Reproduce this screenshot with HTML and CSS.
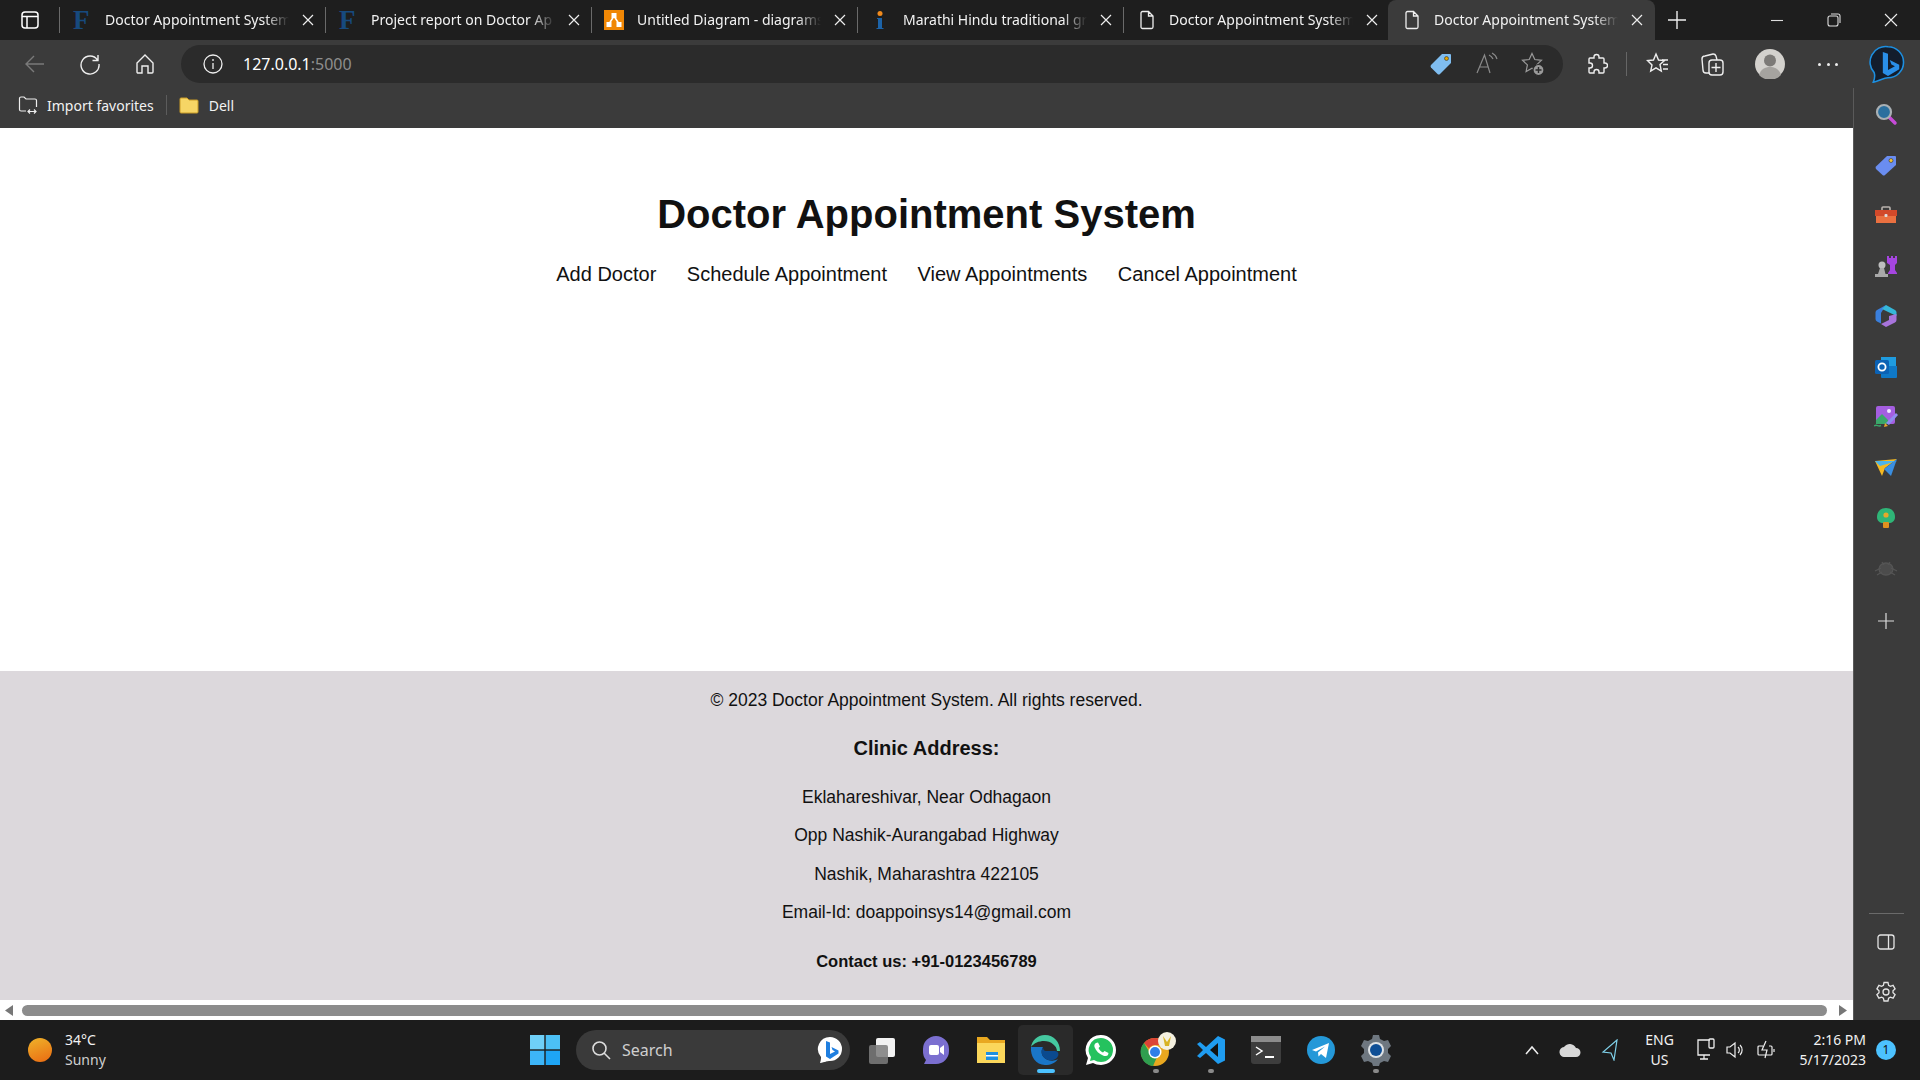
FILE: index.html

```html
<!DOCTYPE html>
<html lang="en">
<head>
    <meta charset="UTF-8">
    <title>Doctor Appointment System</title>
    <link rel="stylesheet" href="styles.css">
</head>
<body>
    <div class="tabstrip">
        <div class="tabActions">
            <svg width="20" height="20" viewBox="0 0 20 20" fill="none" stroke="#fff" stroke-width="1.5"><rect x="2" y="2" width="16" height="16" rx="3"/><path d="M2 6.5h16M7 6.5V18"/></svg>
        </div>
        <div class="tab">
            <span class="favF">F</span>
            <span class="tabTitle">Doctor Appointment System</span>
            <svg class="tabClose" width="12" height="12" viewBox="0 0 12 12" stroke="#eee" stroke-width="1.2"><path d="M1 1l10 10M11 1L1 11"/></svg>
        </div>
        <div class="tab">
            <span class="favF">F</span>
            <span class="tabTitle">Project report on Doctor Ap</span>
            <svg class="tabClose" width="12" height="12" viewBox="0 0 12 12" stroke="#eee" stroke-width="1.2"><path d="M1 1l10 10M11 1L1 11"/></svg>
        </div>
        <div class="tab">
            <svg class="fav" width="20" height="20" viewBox="0 0 20 20"><rect width="20" height="20" fill="#f08705"/><path d="M10 6L5 14M10 6l5 8" stroke="#fff" stroke-width="1.5"/><rect x="7.5" y="3" width="5" height="5" fill="#fff"/><rect x="2.5" y="12" width="5" height="5" fill="#fff"/><rect x="12.5" y="12" width="5" height="5" fill="#fff"/></svg>
            <span class="tabTitle">Untitled Diagram - diagrams</span>
            <svg class="tabClose" width="12" height="12" viewBox="0 0 12 12" stroke="#eee" stroke-width="1.2"><path d="M1 1l10 10M11 1L1 11"/></svg>
        </div>
        <div class="tab">
            <svg class="fav" width="20" height="20" viewBox="0 0 20 20"><circle cx="10" cy="3.5" r="2.5" fill="#f08a1d"/><path d="M8 8h4v10h1.5v1h-7v-1H8v-9H7V8z" fill="#1c63a8"/></svg>
            <span class="tabTitle">Marathi Hindu traditional gr</span>
            <svg class="tabClose" width="12" height="12" viewBox="0 0 12 12" stroke="#eee" stroke-width="1.2"><path d="M1 1l10 10M11 1L1 11"/></svg>
        </div>
        <div class="tab">
            <svg class="fav favPage" width="20" height="20" viewBox="0 0 20 20" fill="none" stroke="#eee" stroke-width="1.3"><path d="M4 3a1.5 1.5 0 0 1 1.5-1.5h6L16 6v11a1.5 1.5 0 0 1-1.5 1.5h-9A1.5 1.5 0 0 1 4 17zM11.5 1.500V6H16"/></svg>
            <span class="tabTitle">Doctor Appointment System</span>
            <svg class="tabClose" width="12" height="12" viewBox="0 0 12 12" stroke="#eee" stroke-width="1.2"><path d="M1 1l10 10M11 1L1 11"/></svg>
        </div>
        <div class="tab tabActive">
            <svg class="fav favPage" width="20" height="20" viewBox="0 0 20 20" fill="none" stroke="#eee" stroke-width="1.3"><path d="M4 3a1.5 1.5 0 0 1 1.5-1.5h6L16 6v11a1.5 1.5 0 0 1-1.5 1.5h-9A1.5 1.5 0 0 1 4 17zM11.5 1.500V6H16"/></svg>
            <span class="tabTitle">Doctor Appointment System</span>
            <svg class="tabClose" width="12" height="12" viewBox="0 0 12 12" stroke="#eee" stroke-width="1.2"><path d="M1 1l10 10M11 1L1 11"/></svg>
        </div>
        <svg class="newTab" width="18" height="18" viewBox="0 0 18 18" stroke="#eee" stroke-width="1.4"><path d="M9 0v18M0 9h18"/></svg>
        <div class="windowButtons">
            <svg width="14" height="14" viewBox="0 0 14 14" stroke="#ddd" stroke-width="1.1"><path d="M1 7.500h12"/></svg>
            <svg width="14" height="14" viewBox="0 0 14 14" fill="none" stroke="#ddd" stroke-width="1.1"><rect x="1" y="3" width="10" height="10" rx="2"/><path d="M4 1h7a2 2 0 0 1 2 2v7"/></svg>
            <svg width="14" height="14" viewBox="0 0 14 14" stroke="#eee" stroke-width="1.1"><path d="M1 1l12 12M13 1L1 13"/></svg>
        </div>
    </div>

    <div class="toolbar">
        <svg class="navBack" width="22" height="22" viewBox="0 0 22 22" fill="none" stroke="#7a7a7a" stroke-width="1.4"><path d="M20 11H2M10 3l-8 8 8 8"/></svg>
        <svg class="navIcon" width="22" height="22" viewBox="0 0 22 22" fill="none" stroke="#eee" stroke-width="1.4"><path d="M18.500 7A9 9 0 1 0 20 11M19 2v5.500h-5.500"/></svg>
        <svg class="navIcon" width="22" height="22" viewBox="0 0 22 22" fill="none" stroke="#eee" stroke-width="1.4"><path d="M3 10l8-8 8 8v9a1 1 0 0 1-1 1h-4v-7H8v7H4a1 1 0 0 1-1-1z"/></svg>
        <div class="omnibox">
            <svg width="20" height="20" viewBox="0 0 20 20" fill="none" stroke="#eee" stroke-width="1.3"><circle cx="10" cy="10" r="9"/><path d="M10 9v6M10 5v2"/></svg>
            <span class="url">127.0.0.1<span class="urlPort">:5000</span></span>
            <div class="omniIcons">
                <svg width="24" height="24" viewBox="0 0 24 24"><path d="M13 2h8a1 1 0 0 1 1 1v8L11 22a2 2 0 0 1-2.500 0l-6.500-6.500a2 2 0 0 1 0-2.500z" fill="#7fbdf0"/><circle cx="17.500" cy="6.500" r="2" fill="#e2a400" stroke="#333" stroke-width=".6"/></svg>
                <svg width="24" height="24" viewBox="0 0 24 24" fill="none" stroke="#8a8a8a" stroke-width="1.2"><path d="M2 21L9.500 3 15 21M5 15h8M14 3a8 8 0 0 1 4 4M17 1a10 10 0 0 1 5 6"/></svg>
                <svg width="24" height="24" viewBox="0 0 24 24" fill="none" stroke="#9a9a9a" stroke-width="1.2"><path d="M11 1.500l2.800 6 6.700.8-4.900 4.600 1.300 6.600-5.900-3.300-5.900 3.300 1.300-6.600L1.500 8.300l6.700-.8z"/><circle cx="17.500" cy="18" r="5.500" fill="#9a9a9a" stroke="#2b2b2b"/><path d="M17.500 15v6M14.500 18h6" stroke="#2b2b2b" stroke-width="1.400"/></svg>
            </div>
        </div>
        <div class="toolIcons">
            <svg width="24" height="24" viewBox="0 0 24 24" fill="none" stroke="#eee" stroke-width="1.4"><path d="M10 6V5a2.500 2.500 0 0 1 5 0v1h4a1 1 0 0 1 1 1v4h1a2.500 2.500 0 0 1 0 5h-1v4a1 1 0 0 1-1 1h-4v-1a2.500 2.500 0 0 0-5 0v1H6a1 1 0 0 1-1-1v-4h1a2.500 2.500 0 0 0 0-5H5V7a1 1 0 0 1 1-1z"/></svg>
            <span class="toolSep"></span>
            <svg width="24" height="24" viewBox="0 0 24 24" fill="none" stroke="#eee" stroke-width="1.4"><path d="M10 2l2.500 6 6 .5-4.500 4 1.300 6.500-5.300-3.200L4.700 19 6 13 1.500 8.500l6-.5zM16 8h6M17 12.500h5M17 17h5"/></svg>
            <svg class="collections" width="24" height="24" viewBox="0 0 24 24" fill="none" stroke="#eee" stroke-width="1.4"><rect x="9" y="8" width="14" height="15" rx="3"/><path d="M9 21H6a3 3 0 0 1-3-3L2 7a3 3 0 0 1 3-3l8-2a3 3 0 0 1 3 2l1 4M16 11v9M11.500 15.500h9"/></svg>
            <svg class="avatar" width="30" height="30" viewBox="0 0 30 30"><circle cx="15" cy="15" r="15" fill="#d3d1cd"/><circle cx="15" cy="11.500" r="6" fill="#7c7a77"/><path d="M4 26c2-6 6-8 11-8s9 2 11 8a15 15 0 0 1-22 0z" fill="#a5a39f"/></svg>
            <span class="more"><i></i><i></i><i></i></span>
            <svg class="bing" width="38" height="38" viewBox="0 0 40 44"><path d="M20 2a18 18 0 0 1 0 36c-5 0-9 3-17 5 2-5 2-8 1-11A18 18 0 0 1 20 2z" fill="#131d2c" stroke="#1d8fe0" stroke-width="1.800"/><path d="M14 8l6 2v19l8-4.500-4-2-2-5 11 5.500v5L20 36l-6-3.500z" fill="#2a8fe8"/></svg>
        </div>
    </div>

    <div class="browserBody">
        <div class="browserMain">
            <div class="bookmarks">
                <svg width="20" height="20" viewBox="0 0 20 20" fill="none" stroke="#eee" stroke-width="1.2"><path d="M8 16H3a1.500 1.500 0 0 1-1.500-1.500v-11A1.500 1.500 0 0 1 3 2h3l2 2h9a1.500 1.500 0 0 1 1.500 1.500V12M10 16.500h8M12 14.500l-2 2 2 2M16 14.500l2 2-2 2"/></svg>
                <span>Import favorites</span>
                <span class="bookmarkSep"></span>
                <svg width="20" height="20" viewBox="0 0 20 20"><path d="M1 4a1 1 0 0 1 1-1h6l2 2h8a1 1 0 0 1 1 1v11a1 1 0 0 1-1 1H2a1 1 0 0 1-1-1z" fill="#f6d565" stroke="#c99b27"/></svg>
                <span class="bookmarkName">Dell</span>
            </div>

            <div class="page">
                <header class="siteHeader">
                    <h1>Doctor Appointment System</h1>
                    <nav class="siteNav">
                        <a>Add Doctor</a>
                        <a>Schedule Appointment</a>
                        <a>View Appointments</a>
                        <a>Cancel Appointment</a>
                    </nav>
                </header>
                <footer class="siteFooter">
                    <p>&copy; 2023 Doctor Appointment System. All rights reserved.</p>
                    <h3>Clinic Address:</h3>
                    <p>Eklahareshivar, Near Odhagaon</p>
                    <p>Opp Nashik-Aurangabad Highway</p>
                    <p>Nashik, Maharashtra 422105</p>
                    <p>Email-Id: doappoinsys14@gmail.com</p>
                    <h4>Contact us: +91-0123456789</h4>
                </footer>
            </div>

            <div class="hScroll">
                <svg width="8" height="11" viewBox="0 0 8 11"><path d="M8 0v11L0 5.500z" fill="#777"/></svg>
                <div class="hThumb"></div>
                <svg width="8" height="11" viewBox="0 0 8 11"><path d="M0 0v11l8-5.500z" fill="#777"/></svg>
            </div>
        </div>

        <aside class="sidebar">
            <svg width="24" height="24" viewBox="0 0 24 24" fill="none"><path d="M15 15l6 6" stroke="#c74bd8" stroke-width="3.500" stroke-linecap="round"/><circle cx="10" cy="10" r="7" fill="#2a6f9e" stroke="#a9b0b4" stroke-width="2.200"/></svg>
            <svg width="24" height="24" viewBox="0 0 24 24"><path d="M13 3h8a1 1 0 0 1 1 1v8L11 22a2 2 0 0 1-2.500 0l-6.500-6a2 2 0 0 1 0-2.500z" fill="#6a8df0"/><circle cx="17" cy="7.500" r="2" fill="#f2c230" stroke="#333" stroke-width=".6"/></svg>
            <svg width="24" height="24" viewBox="0 0 24 24"><path d="M8 8V5a1 1 0 0 1 1-1h6a1 1 0 0 1 1 1v3" fill="none" stroke="#b9b3ae" stroke-width="1.600"/><rect x="1" y="7" width="22" height="6" fill="#d2492a"/><rect x="2" y="13" width="20" height="7" fill="#ea7040"/><rect x="10.500" y="11" width="3" height="3" rx="1" fill="#ddd"/></svg>
            <svg width="24" height="24" viewBox="0 0 24 24"><path d="M13 2h2v2h2V2h2v2h2V2h2v7l-2 2v5l2 3v1h-9v-1l2-3v-5l-3-2z" fill="#a545e0"/><circle cx="8" cy="11" r="3.500" fill="#bdbdbd"/><path d="M6 14h4l1.500 6H14v3H1v-3h3z" fill="#a9a9a9"/></svg>
            <svg width="24" height="24" viewBox="0 0 24 24"><path d="M12 1L3 6a3 3 0 0 0-1.500 2.500V15a3 3 0 0 0 1.500 2.500l4 2V9z" fill="#3a7fdc"/><path d="M12 1l9 5a3 3 0 0 1 1.500 2.500V12L8 5z" fill="#35b7d8"/><path d="M22.500 10v6a3 3 0 0 1-1.500 2.500L12 23l-5-3 8-4V12z" fill="#a874dc"/></svg>
            <svg width="24" height="24" viewBox="0 0 24 24"><rect x="7" y="2" width="15" height="10" fill="#1f9ce0"/><path d="M7 11h16v11a1 1 0 0 1-1 1H8a1 1 0 0 1-1-1z" fill="#0f78c6"/><rect x="1" y="5" width="14" height="14" rx="1.500" fill="#0b62b5"/><circle cx="8" cy="12" r="3.600" fill="none" stroke="#fff" stroke-width="1.800"/></svg>
            <svg width="24" height="24" viewBox="0 0 24 24"><rect x="2" y="1" width="19" height="18" rx="2" fill="#a45ee0"/><path d="M2 15l6-6 6 6v4H2z" fill="#3aa86a"/><circle cx="15" cy="6" r="2" fill="#f0e6ff"/><path d="M12 18L22 8l2 2-9 10z" fill="#8f8cf0"/><path d="M11 18l3 3-4 1z" fill="#eba52d"/><path d="M0 21c3-2 4 1 7-.5" stroke="#3aa86a" stroke-width="1.500" fill="none"/></svg>
            <svg class="sideNarrow" width="24" height="18" viewBox="0 0 24 18"><path d="M1 2l22-2-12 9-3 8z" fill="#f5b921"/><path d="M1 2h22L6 7z" fill="#4db4ea"/><path d="M23 0l-6 17-7-7z" fill="#3a8ee0"/></svg>
            <svg width="24" height="24" viewBox="0 0 24 24"><path d="M12 2c6 0 9 4 9 9 0 4-3 6-6 6H9c-3 0-6-2-6-6 0-5 3-9 9-9z" fill="#2fb577"/><rect x="9" y="16" width="6" height="6" rx="1" fill="#e0911f"/><circle cx="12" cy="9" r="2.600" fill="#e8a82a"/></svg>
            <svg width="24" height="24" viewBox="0 0 24 24" fill="none" stroke="#555" stroke-width="1.300"><ellipse cx="12" cy="12" rx="7" ry="6" fill="#4c4c4c"/><path d="M1 14l6-3M23 14l-6-3M3 18l5-3M21 18l-5-3M8 5l2 3M16 5l-2 3"/></svg>
            <svg class="sidePlus" width="16" height="16" viewBox="0 0 16 16" stroke="#ddd" stroke-width="1.200"><path d="M8 0v16M0 8h16"/></svg>
            <div class="sideBottom">
                <span class="sideRule"></span>
                <svg width="18" height="16" viewBox="0 0 18 16" fill="none" stroke="#e4e4e4" stroke-width="1.300"><rect x="1" y="1" width="16" height="14" rx="2.500"/><path d="M11.500 1v14"/></svg>
                <svg width="22" height="22" viewBox="0 0 22 22" fill="none" stroke="#e4e4e4" stroke-width="1.300"><circle cx="11" cy="11" r="3"/><path d="M9 1.500h4l.6 2.800 1.800 1 2.700-.9 2 3.400-2.100 1.900v2.100l2.100 1.900-2 3.400-2.700-.9-1.800 1-.6 2.800H9l-.6-2.800-1.800-1-2.700.9-2-3.400 2.100-1.900V9.700L1.900 7.800l2-3.400 2.700.9 1.800-1z"/></svg>
            </div>
        </aside>
    </div>

    <div class="taskbar">
        <div class="weather">
            <span class="sun"></span>
            <div class="weatherText">
                <span>34&deg;C</span>
                <span class="dim">Sunny</span>
            </div>
        </div>
        <svg class="winLogo" width="30" height="30" viewBox="0 0 30 30"><rect width="14.300" height="14.300" fill="#6fd0f8"/><rect x="15.700" width="14.300" height="14.300" fill="#4cc0f5"/><rect y="15.700" width="14.300" height="14.300" fill="#3db5f8"/><rect x="15.700" y="15.700" width="14.300" height="14.300" fill="#1ea5f5"/></svg>
        <div class="searchBox">
            <svg width="20" height="20" viewBox="0 0 20 20" fill="none" stroke="#ddd" stroke-width="1.600"><circle cx="8.500" cy="8.500" r="6.500"/><path d="M13 13l6 6"/></svg>
            <span>Search</span>
            <svg class="searchBing" width="26" height="28" viewBox="0 0 26 28"><path d="M13 1a12 12 0 0 1 0 24c-3 0-5 1-10 2 1-3 1-5 1-6A12 12 0 0 1 13 1z" fill="#fff"/><path d="M9 5l4 1.500V18l5-2.500-2.500-1.500-1-3 7 3.500v3L13 23l-4-2.500z" fill="#1f7fe0"/></svg>
        </div>
        <div class="taskIcons">
            <span class="taskItem">
                <svg width="28" height="28" viewBox="0 0 28 28"><rect x="9" y="2" width="19" height="19" fill="#f2f2f2" rx="2"/><rect x="2" y="9" width="19" height="19" fill="#7d7d7d" opacity=".85" rx="2"/></svg>
            </span>
            <span class="taskItem">
                <svg width="28" height="32" viewBox="0 0 28 32"><path d="M14 2a13 13 0 0 1 13 13v2a13 13 0 0 1-13 13H2l2-4a13 13 0 0 1-3-9v-2A13 13 0 0 1 14 2z" fill="#7b6fd0"/><rect x="7" y="11" width="10" height="10" rx="2" fill="#fff"/><path d="M18 14l4-3v10l-4-3z" fill="#fff"/></svg>
            </span>
            <span class="taskItem">
                <svg width="30" height="28" viewBox="0 0 30 28"><path d="M1 1h10l3 3h15v23H1z" fill="#e9a820"/><rect x="1" y="7" width="28" height="20" fill="#fbd75b"/><rect x="10" y="16" width="12" height="8" fill="#1f8fe0"/><rect x="10" y="19" width="12" height="1.500" fill="#fff"/></svg>
            </span>
            <span class="taskItem taskItemActive">
                <svg width="32" height="32" viewBox="0 0 32 32"><path d="M30 17C30 8 24 1 15 1 7 1 2 7 1 13c3-4 8-6 13-6 7 0 13 5 13 10z" fill="#45c8a0"/><path d="M1 13c-1 9 5 18 14 18 6 0 10-2 13-6-3 2-7 2-10 1-6-2-8-8-5-13-5 0-9 0-12 0z" fill="#1a76c8"/><path d="M13 13c-3 5-1 11 5 13 5 1 9-1 10-4 1-2 0-5-3-5h-9c-2 0-3-2-3-4z" fill="#0a4a8f"/></svg>
            </span>
            <span class="taskItem">
                <svg width="32" height="32" viewBox="0 0 32 32"><path d="M16 1a15 15 0 0 1 0 30c-3 0-6-1-8-2l-7 2 2-7a15 15 0 0 1 13-23z" fill="#fff"/><path d="M16 4a12 12 0 0 1 0 24c-3 0-5-1-7-2l-4 1 1-4a12 12 0 0 1 10-19z" fill="#25c25e"/><path d="M11 9l2-.5 2 4-1.500 1.500c1 2 2.500 3.500 4.500 4.500L19.500 17l4 2-.5 2c-1 1-3 1.500-5 .5-4-1.500-7-4.500-8.500-8.500-.5-2 0-3 1.500-4z" fill="#fff"/></svg>
            </span>
            <span class="taskItem taskItemOpen taskItemChrome">
                <svg width="36" height="36" viewBox="0 0 36 36"><circle cx="15" cy="20" r="14" fill="#e8a71f"/><path d="M15 6a14 14 0 0 1 12 7H15a7 7 0 0 0-6 3.500L4 11a14 14 0 0 1 11-5z" fill="#db4437"/><path d="M4 11l6 10a7 7 0 0 0 7 4l-4 9A14 14 0 0 1 4 11z" fill="#2f9e4f"/><circle cx="15" cy="20" r="6.500" fill="#fff"/><circle cx="15" cy="20" r="5" fill="#2f7ee8"/><circle cx="27" cy="9" r="9" fill="#f4f0e0"/><path d="M23 4l4 6 4-6-2 10h-4z" fill="#d8b324"/></svg>
            </span>
            <span class="taskItem taskItemOpen">
                <svg width="30" height="30" viewBox="0 0 30 30"><path d="M22 1l7 3.500v21L22 29 10 18l-6 5-3-2 6-6-6-6 3-2 6 5z" fill="#1f9cf0"/><path d="M22 8v14l-8-7z" fill="#121212"/></svg>
            </span>
            <span class="taskItem">
                <svg width="30" height="28" viewBox="0 0 30 28"><rect width="30" height="28" rx="3" fill="#3d3d3d"/><rect width="30" height="6" fill="#8c8c8c"/><path d="M5 11l6 4-6 4" fill="none" stroke="#fff" stroke-width="1.500"/><path d="M14 21h9" stroke="#fff" stroke-width="2"/></svg>
            </span>
            <span class="taskItem">
                <svg width="28" height="28" viewBox="0 0 28 28"><circle cx="14" cy="14" r="14" fill="#2498d8"/><path d="M5 14l17-7-3 15-5-4-2.500 2.500-.5-4 7-6-9 5z" fill="#fff"/></svg>
            </span>
            <span class="taskItem taskItemOpen">
                <svg width="32" height="32" viewBox="0 0 32 32"><path d="M13 1h6l1 4 4 2 4-1 3 6-3 3v4l3 3-3 6-4-1-4 2-1 3h-6l-1-3-4-2-4 1-3-6 3-3v-4l-3-3 3-6 4 1 4-2z" fill="#6e7780"/><circle cx="16" cy="16" r="8" fill="#dfe3e6"/><circle cx="16" cy="16" r="6" fill="#0f4f96"/></svg>
            </span>
        </div>
        <div class="tray">
            <svg width="14" height="10" viewBox="0 0 14 10" fill="none" stroke="#eee" stroke-width="1.500"><path d="M1 9l6-7 6 7"/></svg>
            <svg class="trayCloud" width="22" height="14" viewBox="0 0 22 14"><path d="M6 14a5 5 0 0 1-1-10 7 7 0 0 1 12 1 4.500 4.500 0 0 1 0 9z" fill="#d8d8d8"/></svg>
            <svg class="trayPlane" width="18" height="22" viewBox="0 0 18 22" fill="none" stroke="#7fd0e8" stroke-width="1.200"><path d="M16 1L2 13l8 1 3 7z"/></svg>
            <div class="lang"><span>ENG</span><span>US</span></div>
            <svg class="trayNet" width="20" height="24" viewBox="0 0 20 24" fill="none" stroke="#eee" stroke-width="1.300"><path d="M14 2H2v15h12M8 17v4M4 21h8"/><rect x="13" y="1" width="5" height="9" rx="1"/></svg>
            <svg class="trayVolume" width="20" height="20" viewBox="0 0 20 20" fill="none" stroke="#eee" stroke-width="1.200"><path d="M2 7v6h3l5 4V3L5 7zM13 7a4 4 0 0 1 0 6M15 5a7 7 0 0 1 0 10"/></svg>
            <svg class="trayBattery" width="22" height="20" viewBox="0 0 22 20" fill="none" stroke="#eee" stroke-width="1.200"><path d="M7 6H3a1 1 0 0 0-1 1v7a1 1 0 0 0 1 1h12a1 1 0 0 0 1-1V7a1 1 0 0 0-1-1h-2M18 9v3M10 1L6 10h5l-2 8"/></svg>
            <div class="clock"><span>2:16 PM</span><span>5/17/2023</span></div>
            <span class="badge">1</span>
        </div>
    </div>
</body>
</html>
```

FILE: styles.css

```css
* {
    box-sizing: border-box;
}
body {
    margin: 0;
    width: 1920px;
    height: 1080px;
    overflow: hidden;
    display: flex;
    flex-direction: column;
    font-family: "Noto Sans", sans-serif;
    color: #f2f2f2;
    background-color: #3b3b3b;
}
svg {
    flex: none;
    display: block;
}

/* tabs */
.tabstrip {
    height: 40px;
    display: flex;
    align-items: center;
    background-color: #1e1e1e;
}
.tabActions {
    width: 59px;
    height: 40px;
    display: flex;
    align-items: center;
    padding-left: 20px;
}
.tab {
    width: 266px;
    height: 40px;
    padding-left: 12px;
    display: flex;
    align-items: center;
    position: relative;
    border-left: 1px solid #6a6a6a;
    background-clip: padding-box;
    border-image: linear-gradient(transparent 8px, #6a6a6a 8px, #6a6a6a 32px, transparent 32px) 1;
}
.tabActive {
    border: none;
    padding-left: 13px;
    margin-left: -1px;
    width: 267px;
    background-color: #3b3b3b;
    border-radius: 8px 8px 0 0;
}
.favF {
    width: 20px;
    flex: none;
    padding-left: 1px;
    font-family: "Liberation Serif", serif;
    font-weight: bold;
    font-size: 27px;
    line-height: 28px;
    color: #174a7e;
}
.fav {
    width: 20px;
}
.favPage {
    margin-left: 1px;
    margin-right: -1px;
}
.tabTitle {
    margin-left: 13px;
    margin-bottom: 2px;
    width: 187px;
    flex: none;
    overflow: hidden;
    white-space: nowrap;
    font-size: 14px;
    -webkit-mask-image: linear-gradient(90deg, #000 160px, transparent 184px);
    mask-image: linear-gradient(90deg, #000 160px, transparent 184px);
}
.tabClose {
    margin-left: 10px;
}
.newTab {
    margin-left: 13px;
}
.windowButtons {
    margin-left: auto;
    display: flex;
    gap: 43px;
    padding-right: 22px;
    align-items: center;
}

/* toolbar */
.toolbar {
    height: 48px;
    display: flex;
    align-items: center;
    padding-left: 24px;
    background-color: #3b3b3b;
}
.navIcon {
    margin-left: 33px;
}
.omnibox {
    margin-left: 25px;
    width: 1382px;
    height: 38px;
    padding: 0 18px 0 22px;
    border-radius: 19px;
    display: flex;
    align-items: center;
    background-color: #2b2b2b;
}
.url {
    margin-left: 20px;
    font-size: 16px;
    color: #fff;
}
.urlPort {
    color: #8e8e8e;
}
.omniIcons {
    margin-left: auto;
    display: flex;
    gap: 22px;
    align-items: center;
}
.toolIcons {
    margin-left: 21px;
    display: flex;
    align-items: center;
}
.toolSep {
    width: 1px;
    height: 24px;
    margin: 0 19px 0 18px;
    background-color: #666;
}
.collections {
    margin-left: 30px;
}
.avatar {
    margin-left: 31px;
}
.more {
    margin-left: 33px;
    width: 20px;
    display: flex;
    justify-content: space-between;
}
.more i {
    width: 3px;
    height: 3px;
    border-radius: 50%;
    background-color: #eee;
}
.bing {
    margin-left: 31px;
}

/* body of the browser */
.browserBody {
    height: 932px;
    display: flex;
}
.browserMain {
    width: 1853px;
    display: flex;
    flex-direction: column;
}
.bookmarks {
    height: 40px;
    padding: 0 0 6px 18px;
    display: flex;
    align-items: center;
    font-size: 14px;
    background-color: #3b3b3b;
}
.bookmarks span {
    margin-left: 9px;
}
.bookmarks .bookmarkSep {
    width: 1px;
    height: 20px;
    margin: 0 12px;
    background-color: #5c5c5c;
}
.bookmarks .bookmarkName {
    margin-left: 10px;
}
.page {
    height: 872px;
    display: flex;
    flex-direction: column;
    justify-content: space-between;
    text-align: center;
    font-family: "Liberation Sans", Arial, sans-serif;
    color: #111;
    background-color: #fff;
}
.siteHeader {
    padding-top: 64px;
}
.siteHeader h1 {
    margin: 0;
    font-size: 40px;
}
.siteNav {
    margin-top: 26px;
    display: flex;
    justify-content: center;
    gap: 30.500px;
    font-size: 20px;
}
.siteFooter {
    height: 329px;
    padding-top: 19px;
    background-color: #dcd8dc;
    font-size: 17.5px;
}
.siteFooter p {
    margin: 0 0 17.400px;
}
.siteFooter h3 {
    margin: 26px 0 27px;
    font-size: 20px;
}
.siteFooter h4 {
    margin: 28.500px 0 0;
    font-size: 16.500px;
}
.hScroll {
    height: 20px;
    padding: 0 6px 0 5px;
    display: flex;
    align-items: center;
    justify-content: space-between;
    background-color: #fff;
}
.hThumb {
    width: 1805px;
    height: 11px;
    margin-right: 4px;
    border-radius: 6px;
    background-color: #8c8c8c;
}

/* sidebar */
.sidebar {
    width: 67px;
    height: 932px;
    padding: 14px 2px 17px 0;
    display: flex;
    flex-direction: column;
    align-items: center;
    gap: 26.500px;
    border-left: 1px solid #5a5a5a;
    background-color: #3b3b3b;
}
.sideNarrow {
    margin: 3px 0;
}
.sidePlus {
    margin: 6px 0 0;
}
.sideBottom {
    margin-top: auto;
    display: flex;
    flex-direction: column;
    align-items: center;
}
.sideRule {
    width: 35px;
    height: 1px;
    margin-bottom: 20px;
    background-color: #6a6a6a;
}
.sideBottom svg:first-of-type {
    margin-bottom: 31px;
}

/* taskbar */
.taskbar {
    height: 60px;
    padding-left: 28px;
    display: flex;
    align-items: center;
    background-color: #1c1c1c;
}
.weather {
    width: 502px;
    display: flex;
    align-items: center;
    gap: 13px;
    font-size: 14px;
}
.sun {
    width: 24px;
    height: 24px;
    border-radius: 50%;
    background: linear-gradient(160deg, #eeb32a, #ea6a12);
}
.weatherText {
    display: flex;
    flex-direction: column;
    line-height: 20px;
}
.dim {
    color: #cfcfcf;
}
.winLogo {
    margin-right: 16px;
}
.searchBox {
    width: 274px;
    height: 40px;
    padding: 0 7px 0 15px;
    border-radius: 20px;
    display: flex;
    align-items: center;
    gap: 11px;
    font-size: 16px;
    color: #cfcfcf;
    background-color: #3a3a3a;
}
.searchBing {
    margin-left: auto;
}
.taskIcons {
    display: flex;
    margin-left: 3px;
}
.taskItem {
    width: 55px;
    height: 50px;
    display: flex;
    align-items: center;
    justify-content: center;
    position: relative;
}
.taskItemChrome svg {
    margin-left: 4px;
}
.taskItemActive {
    border-radius: 5px;
    background-color: #2a2a2a;
}
.taskItemActive::after,
.taskItemOpen::after {
    content: "";
    position: absolute;
    bottom: 2px;
    left: 50%;
    width: 6px;
    height: 4px;
    margin-left: -3px;
    border-radius: 2px;
    background-color: #8a8a8a;
}
.taskItemActive::after {
    width: 18px;
    margin-left: -9px;
    background-color: #4cc2ff;
}
.tray {
    flex: 1;
    padding-right: 24px;
    display: flex;
    align-items: center;
    justify-content: flex-end;
    font-size: 14px;
}
.trayCloud {
    margin-left: 20px;
}
.trayPlane {
    margin-left: 20px;
}
.lang {
    width: 36px;
    margin-left: 23px;
    display: flex;
    flex-direction: column;
    align-items: center;
    line-height: 20px;
}
.trayNet {
    margin-left: 18px;
}
.trayVolume {
    margin-left: 9px;
}
.trayBattery {
    margin-left: 11px;
}
.clock {
    margin-left: 22px;
    display: flex;
    flex-direction: column;
    align-items: flex-end;
    line-height: 20px;
}
.badge {
    width: 20px;
    height: 20px;
    margin-left: 10px;
    border-radius: 50%;
    font-size: 12px;
    line-height: 20px;
    text-align: center;
    color: #111;
    background-color: #4cc2ff;
}
```
